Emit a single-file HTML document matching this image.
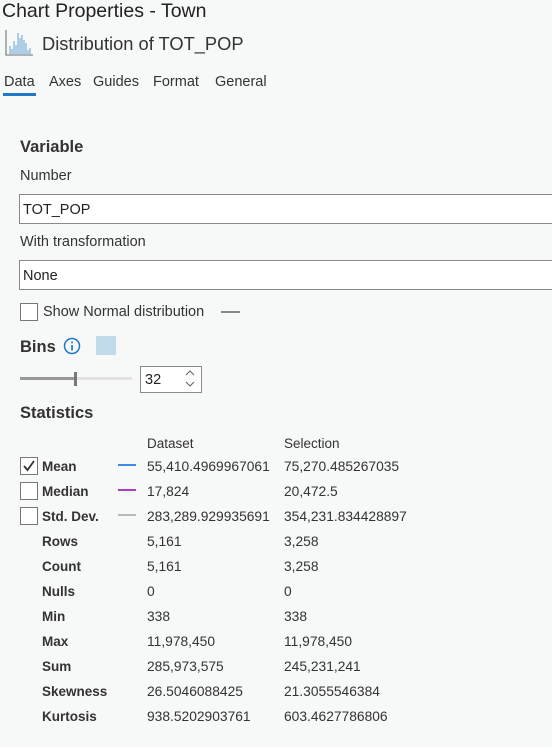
<!DOCTYPE html>
<html><head><style>
body{margin:0;width:552px;height:747px;background:#f7f8f8;font-family:"Liberation Sans",sans-serif;color:#333;position:relative;overflow:hidden}
.a{position:absolute;white-space:nowrap}
.t{font-size:14.5px;color:#333}
.b{font-weight:bold}
.box{position:absolute;background:#fff;border:1px solid #8a8a8a}
.cb{position:absolute;width:16px;height:16px;border:1px solid #777;background:#fff}
</style></head><body>
<div class="a" style="left:2px;top:0;font-size:19.5px;color:#222">Chart Properties - Town</div>
<svg class="a" style="left:5px;top:29px" width="28" height="28" viewBox="0 0 28 28">
<path d="M1 1V26H28" stroke="#888" stroke-width="1.3" fill="none"/>
<g stroke="#7fb2dc" stroke-width="1.2"><path d="M5 25V17M9 25V12M13 25V4M17 25V6M21 25V14M25 25V19M7 25V20M11 25V16M15 25V9M19 25V11M23 25V21"/></g>
</svg>
<div class="a" style="left:42px;top:33px;font-size:18.3px;color:#333">Distribution of TOT_POP</div>
<div class="a t" style="left:4px;top:74px;color:#333">Data</div>
<div class="a" style="left:3px;top:93px;width:33px;height:3px;background:#1f78c8"></div>
<div class="a t" style="left:49px;top:74px">Axes</div>
<div class="a t" style="left:93px;top:74px">Guides</div>
<div class="a t" style="left:153px;top:74px">Format</div>
<div class="a t" style="left:215px;top:74px">General</div>
<div class="a b" style="left:20px;top:138px;font-size:16.5px">Variable</div>
<div class="a t" style="left:20px;top:168px">Number</div>
<div class="box" style="left:19px;top:194px;width:560px;height:28px"></div>
<div class="a t" style="left:23px;top:202px;color:#222">TOT_POP</div>
<div class="a t" style="left:20px;top:234px">With transformation</div>
<div class="box" style="left:19px;top:260px;width:560px;height:28px"></div>
<div class="a t" style="left:23px;top:268px;color:#222">None</div>
<div class="cb" style="left:20px;top:303px"></div>
<div class="a t" style="left:43px;top:304px">Show Normal distribution</div>
<div class="a" style="left:221px;top:311px;width:19px;height:2px;background:#888"></div>
<div class="a b" style="left:20px;top:338px;font-size:16.5px">Bins</div>
<svg class="a" style="left:63px;top:337px" width="18" height="18"><circle cx="9" cy="9" r="7.5" stroke="#1f78c8" stroke-width="1.5" fill="none"/><rect x="8.2" y="8" width="1.7" height="5.5" fill="#1f78c8"/><rect x="8.2" y="4.6" width="1.7" height="1.7" fill="#1f78c8"/></svg>
<div class="a" style="left:96px;top:336px;width:20px;height:19px;background:#c2dbeb"></div>
<div class="a" style="left:20px;top:377px;width:112px;height:3px;background:#e2e2e2"></div>
<div class="a" style="left:20px;top:377px;width:56px;height:3px;background:#999"></div>
<div class="a" style="left:74px;top:372px;width:3px;height:14px;background:#777"></div>
<div class="box" style="left:140px;top:366px;width:60px;height:25px"></div>
<div class="a t" style="left:145px;top:372px;color:#222">32</div>
<svg class="a" style="left:184px;top:368px" width="14" height="22"><path d="M2 7L6 3L10 7M2 14L6 18L10 14" stroke="#666" fill="none" stroke-width="1.1"/></svg>
<div class="a b" style="left:20px;top:404px;font-size:16.5px">Statistics</div>
<div class="a" style="left:147px;top:436px;font-size:13.5px">Dataset</div>
<div class="a" style="left:284px;top:436px;font-size:13.5px">Selection</div>
<div class="cb" style="left:20px;top:457px"></div>
<svg class="a" style="left:21px;top:458px" width="16" height="16"><path d="M3 8L6.5 12L13 3" stroke="#333" stroke-width="1.8" fill="none"/></svg>
<div class="cb" style="left:20px;top:482px"></div>
<div class="cb" style="left:20px;top:507px"></div>
<div class="a" style="left:118px;top:464px;width:18px;height:2px;background:#3d8de8"></div>
<div class="a" style="left:118px;top:489px;width:18px;height:2px;background:#a540c0"></div>
<div class="a" style="left:118px;top:514px;width:18px;height:2px;background:#bbb"></div>
<div style="position:absolute;left:42px;top:454px;font-size:13.5px;line-height:25px;font-weight:bold;color:#333">Mean<br>Median<br>Std. Dev.<br>Rows<br>Count<br>Nulls<br>Min<br>Max<br>Sum<br>Skewness<br>Kurtosis</div>
<div style="position:absolute;left:147px;top:454px;font-size:13.8px;line-height:25px;color:#333">55,410.4969967061<br>17,824<br>283,289.929935691<br>5,161<br>5,161<br>0<br>338<br>11,978,450<br>285,973,575<br>26.5046088425<br>938.5202903761</div>
<div style="position:absolute;left:284px;top:454px;font-size:13.8px;line-height:25px;color:#333">75,270.485267035<br>20,472.5<br>354,231.834428897<br>3,258<br>3,258<br>0<br>338<br>11,978,450<br>245,231,241<br>21.3055546384<br>603.4627786806</div>
</body></html>
